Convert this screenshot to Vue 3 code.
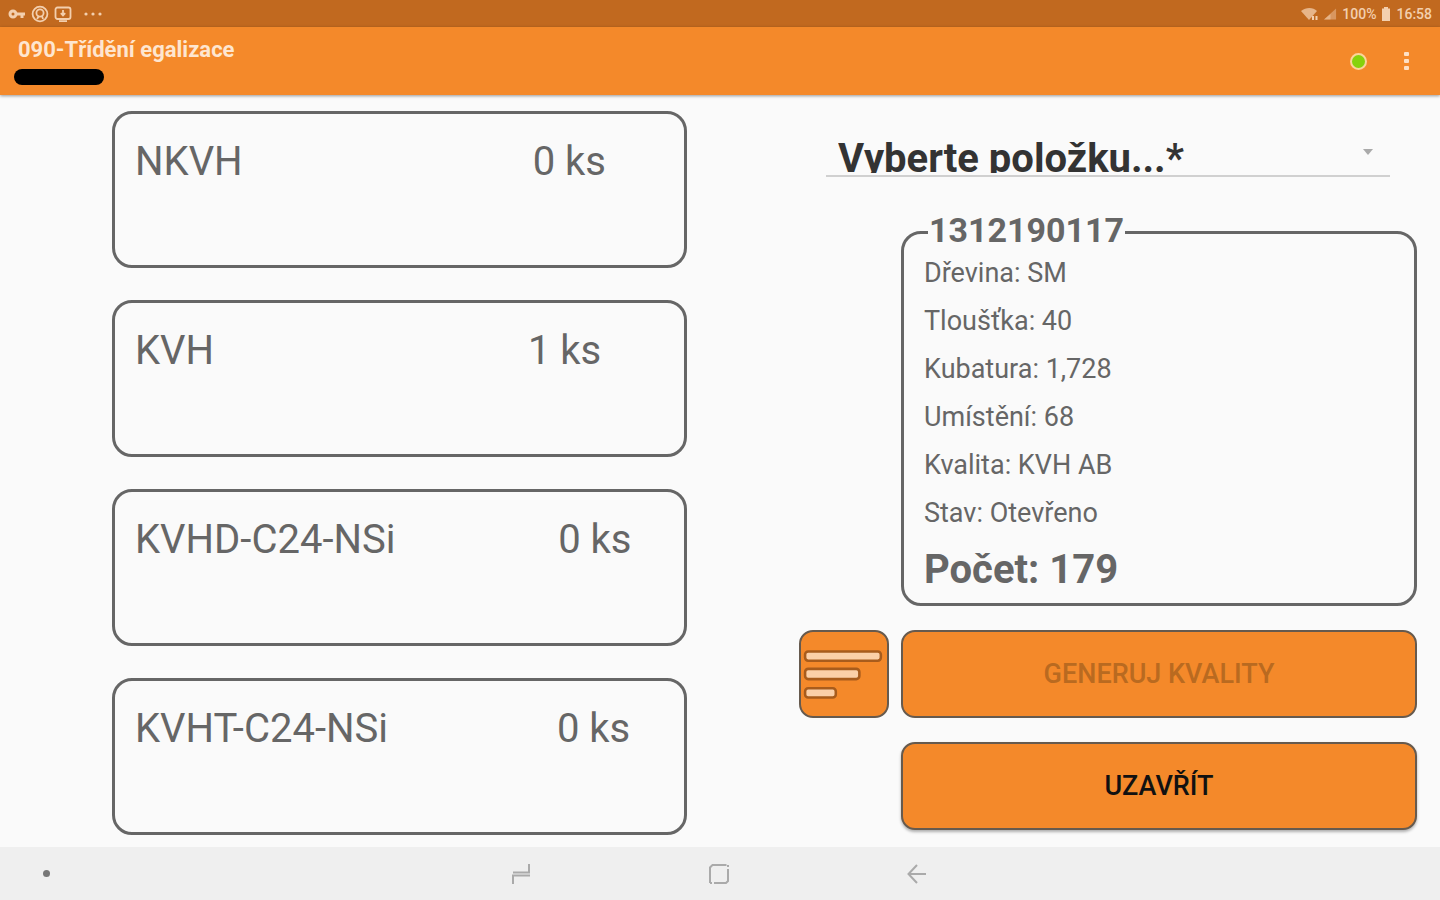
<template>
  <div class="screen">
    <div class="status-bar">
      <div class="status-group">
        <svg class="icon-key" viewBox="0 0 18 12" aria-hidden="true">
          <circle cx="5" cy="6" r="3" fill="none" stroke="currentColor" stroke-width="3" />
          <path d="M8 6h9M14 6v4" fill="none" stroke="currentColor" stroke-width="3" />
        </svg>
        <svg class="icon-status" viewBox="0 0 18 18" aria-hidden="true">
          <g fill="none" stroke="currentColor" stroke-width="1.8">
            <circle cx="9" cy="9" r="7.4" />
            <circle cx="9" cy="8" r="3.6" />
            <path d="M6 14l2-3M12 14l-1-3" />
          </g>
        </svg>
        <svg class="icon-status" viewBox="0 0 18 18" aria-hidden="true">
          <g fill="none" stroke="currentColor" stroke-width="1.8">
            <rect x="1.5" y="2.5" width="15" height="11.5" rx="2" />
            <path d="M5 16.2h8M9 5v5M6.8 8.2L9 10.4l2.2-2.2" />
          </g>
        </svg>
        <svg class="icon-more" viewBox="0 0 20 4" aria-hidden="true">
          <circle cx="3" cy="2" r="1.6" fill="currentColor" />
          <circle cx="10" cy="2" r="1.6" fill="currentColor" />
          <circle cx="17" cy="2" r="1.6" fill="currentColor" />
        </svg>
      </div>
      <div class="status-group status-right">
        <svg class="icon-wifi" viewBox="0 0 18 14" aria-hidden="true">
          <path d="M0 4C5 0 12 0 16 4L8 13z" fill="currentColor" opacity="0.75" />
          <path d="M12 9v4M15.5 9v4" stroke="currentColor" stroke-width="2" />
        </svg>
        <svg class="icon-signal" viewBox="0 0 14 14" aria-hidden="true">
          <path d="M0 13L13 1v12z" fill="currentColor" opacity="0.45" />
          <path d="M0 13l7-6v6z" fill="currentColor" opacity="0.5" />
        </svg>
        <span>100%</span>
        <svg class="icon-battery" viewBox="0 0 10 14" aria-hidden="true">
          <path d="M3 0h4v1.500h2V14H1V1.500h2z" fill="currentColor" />
        </svg>
        <span>16:58</span>
      </div>
    </div>

    <header class="app-bar">
      <div class="app-titles">
        <h1>090-Třídění egalizace</h1>
        <div class="user-mask"></div>
      </div>
      <div class="app-actions">
        <span class="online-dot"></span>
        <button class="menu-btn" type="button" aria-label="Menu">
          <svg viewBox="0 0 6 20" aria-hidden="true">
            <rect x="1" y="1" width="5" height="4" rx="1" fill="currentColor" />
            <rect x="1" y="8" width="5" height="4" rx="1" fill="currentColor" />
            <rect x="1" y="15" width="5" height="4" rx="1" fill="currentColor" />
          </svg>
        </button>
      </div>
    </header>

    <main class="content">
      <div class="quality-list">
        <div
          v-for="quality in qualities"
          :key="quality.name"
          class="quality-card"
          @click="addPiece(quality)"
        >
          <span class="quality-name">{{ quality.name }}</span>
          <span class="quality-count">{{ quality.count }} ks</span>
        </div>
      </div>

      <div class="side-panel">
        <div class="spinner">
          <div class="spinner-clip">
            <select v-model="selected" aria-label="Položka">
              <option value="">Vyberte položku...*</option>
            </select>
          </div>
          <svg class="spinner-arrow" viewBox="0 0 10 6" aria-hidden="true">
            <path d="M0 0h10L5 6z" fill="currentColor" />
          </svg>
        </div>

        <fieldset class="package">
          <legend>1312190117</legend>
          <p v-for="row in details" :key="row.label">{{ row.label }}: {{ row.value }}</p>
          <p class="package-total">Počet: 179</p>
        </fieldset>

        <button class="action-btn list-btn" type="button" aria-label="Seznam">
          <svg viewBox="0 0 84 84" aria-hidden="true">
            <g fill="#fbd0a8" stroke="#a85c1c" stroke-width="2.500">
              <rect x="4" y="19" width="74" height="9" rx="3" />
              <rect x="4" y="36" width="53" height="10" rx="3" />
              <rect x="4" y="55" width="30" height="9" rx="3" />
            </g>
          </svg>
        </button>
        <button class="action-btn" type="button" disabled>GENERUJ KVALITY</button>
        <button class="action-btn close-btn" type="button">UZAVŘÍT</button>
      </div>
    </main>

    <nav class="nav-bar">
      <span class="nav-dot"></span>
      <div class="nav-buttons">
        <button type="button" aria-label="Poslední aplikace">
          <svg viewBox="0 0 22 22" aria-hidden="true">
            <path d="M2 21v-8.500h17M2 9.500h16V1" fill="none" stroke="currentColor" stroke-width="2" />
          </svg>
        </button>
        <button type="button" aria-label="Domů">
          <svg viewBox="0 0 22 22" aria-hidden="true">
            <path
              d="M1 20V4.500L3.500 2H17.500M19 6v12l-2 2H5M1 20h2M19 2v2"
              fill="none"
              stroke="currentColor"
              stroke-width="2"
            />
          </svg>
        </button>
        <button type="button" aria-label="Zpět">
          <svg viewBox="0 0 22 22" aria-hidden="true">
            <path d="M19 11H2M10 2l-8.500 9 8.500 9" fill="none" stroke="currentColor" stroke-width="2" />
          </svg>
        </button>
      </div>
    </nav>
  </div>
</template>

<script setup>
import { ref } from 'vue'

const selected = ref('')

const qualities = ref([
  { name: 'NKVH', count: 0 },
  { name: 'KVH', count: 1 },
  { name: 'KVHD-C24-NSi', count: 0 },
  { name: 'KVHT-C24-NSi', count: 0 }
])

const details = [
  { label: 'Dřevina', value: 'SM' },
  { label: 'Tloušťka', value: '40' },
  { label: 'Kubatura', value: '1,728' },
  { label: 'Umístění', value: '68' },
  { label: 'Kvalita', value: 'KVH AB' },
  { label: 'Stav', value: 'Otevřeno' }
]

const addPiece = (quality) => {
  quality.count++
}
</script>

<style>
body {
  margin: 0;
  background: #fafafa;
}
</style>

<style scoped>
* {
  box-sizing: border-box;
}

.screen {
  display: flex;
  flex-direction: column;
  min-height: 100vh;
  background: #fafafa;
  color: #666;
  font-family: Roboto, "Noto Sans", sans-serif;
}

/* Top bars */
.status-bar {
  display: flex;
  justify-content: space-between;
  align-items: center;
  height: 27px;
  padding: 0 8px;
  background: #c1691f;
  color: #f3cfae;
  font-size: 14px;
  font-weight: 500;
}

.status-group {
  display: flex;
  align-items: center;
  gap: 5px;
}

.icon-key {
  width: 18px;
  height: 12px;
}

.icon-status {
  width: 18px;
  height: 18px;
}

.icon-more {
  width: 20px;
  height: 4px;
  margin-left: 6px;
}

.icon-wifi {
  width: 18px;
  height: 14px;
}

.icon-signal {
  width: 13px;
  height: 14px;
}

.icon-battery {
  width: 10px;
  height: 14px;
}

.app-bar {
  display: flex;
  justify-content: space-between;
  align-items: center;
  height: 68px;
  padding: 0 31px 0 14px;
  background: #f4892a;
  box-shadow: 0 1px 3px rgba(0, 0, 0, 0.4);
}

.app-titles h1 {
  margin: 0 0 6px 4px;
  color: #fee6d0;
  font-size: 22px;
  font-weight: 700;
  line-height: 26px;
}

.user-mask {
  width: 90px;
  height: 16px;
  border-radius: 8px;
  background: #000;
}

.app-actions {
  display: flex;
  align-items: center;
  gap: 36px;
}

.online-dot {
  width: 17px;
  height: 17px;
  border: 2px solid #fbd59a;
  border-radius: 50%;
  background: #86d20c;
}

.menu-btn {
  display: flex;
  padding: 0;
  border: none;
  background: none;
  color: #fee0c4;
}

.menu-btn svg {
  width: 6px;
  height: 20px;
}

/* Content */
.content {
  display: grid;
  flex: 1;
  grid-template-columns: 575fr 618fr;
  gap: 112px;
  padding: 16px 23px 12px 112px;
}

.quality-list {
  display: grid;
  grid-auto-rows: 1fr;
  gap: 32px;
}

.quality-card {
  display: flex;
  align-items: flex-start;
  padding: 24px 20px;
  border: 3px solid #666;
  border-radius: 20px;
  font-size: 40px;
  line-height: 48px;
  cursor: pointer;
}

.quality-name {
  flex-grow: 5;
}

.quality-count {
  flex-grow: 1;
}

.side-panel {
  display: grid;
  grid-template-columns: 90px 1fr;
  align-content: start;
  column-gap: 12px;
  row-gap: 24px;
  padding-top: 16px;
}

.spinner {
  position: relative;
  grid-column: 1 / -1;
  margin: 0 27px 14px;
  padding-bottom: 2px;
  border-bottom: 2px solid #d0d0d0;
}

.spinner-clip {
  height: 46px;
  overflow: hidden;
}

.spinner select {
  width: 100%;
  height: 62px;
  padding: 0 40px 0 12px;
  border: none;
  appearance: none;
  background: transparent;
  color: #333;
  font-family: inherit;
  font-size: 40px;
  font-weight: 700;
}

.spinner-arrow {
  position: absolute;
  top: 22px;
  right: 17px;
  width: 10px;
  height: 6px;
  color: #aaa;
  pointer-events: none;
}

.package {
  grid-column: 2;
  min-width: 0;
  margin: 0;
  padding: 0 20px;
  border: 3px solid #666;
  border-radius: 20px;
}

.package legend {
  margin-left: 4px;
  padding: 0 1px 4px;
  font-size: 34px;
  font-weight: 700;
  line-height: 30px;
}

.package p {
  margin: 0;
  font-size: 27px;
  line-height: 48px;
}

.package .package-total {
  font-size: 40px;
  font-weight: 700;
  line-height: 66px;
}

.action-btn {
  height: 88px;
  padding: 0;
  border: 2px solid #665a4e;
  border-radius: 14px;
  background: #f4892a;
  color: #111;
  font-family: inherit;
  font-size: 27px;
  font-weight: 500;
}

.action-btn:disabled {
  color: #b96a20;
}

.list-btn svg {
  display: block;
  width: 100%;
}

.close-btn {
  grid-column: 2;
  box-shadow: 0 2px 3px rgba(0, 0, 0, 0.3);
}

/* System navigation */
.nav-bar {
  display: grid;
  grid-template-columns: 1fr 418px 1fr;
  align-items: center;
  height: 53px;
  background: #efefef;
}

.nav-dot {
  width: 7px;
  height: 7px;
  margin-left: 43px;
  border-radius: 50%;
  background: #777;
}

.nav-buttons {
  display: flex;
  justify-content: space-between;
}

.nav-buttons button {
  display: flex;
  padding: 0;
  border: none;
  background: none;
  color: #aaa;
}

.nav-buttons svg {
  width: 22px;
  height: 22px;
}
</style>
